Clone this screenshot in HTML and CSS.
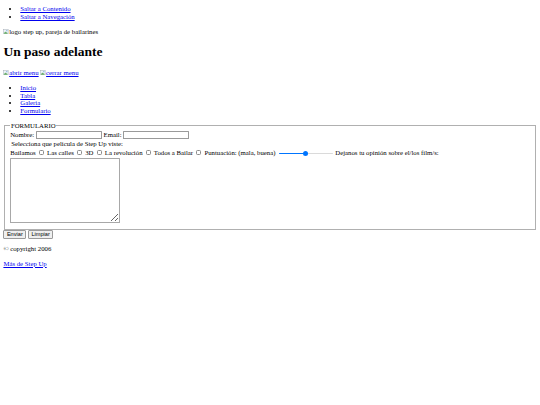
FILE: index.html
```html
<!DOCTYPE html>
<html lang="es">
<head>
<meta charset="utf-8">
<title>Step Up</title>
<link rel="stylesheet" href="styles.css">
</head>
<body class="page">
<header>
  <ul class="list list-top">
    <li><a href="#contenido">Saltar a Contenido</a></li>
    <li><a href="#nav">Saltar a Navegación</a></li>
  </ul>
  <div class="logo"><svg class="broken-icon" viewBox="0 0 8 8" aria-hidden="true"><rect x="0.5" y="0.5" width="7" height="7" fill="#eef3f7" stroke="#9aa4ad" stroke-width="0.6"/><path d="M1 6.8 L3.2 3.8 L4.6 5.4 L5.6 4.4 L7 6.8 Z" fill="#5aa35a"/><circle cx="5.6" cy="2.4" r="0.9" fill="#6fa8dc"/></svg>logo step up, pareja de bailarines</div>
  <h1 class="title">Un paso adelante</h1>
  <p class="para"><a href="#" class="broken"><svg class="broken-icon" viewBox="0 0 8 8" aria-hidden="true"><rect x="0.5" y="0.5" width="7" height="7" fill="#eef3f7" stroke="#9aa4ad" stroke-width="0.6"/><path d="M1 6.8 L3.2 3.8 L4.6 5.4 L5.6 4.4 L7 6.8 Z" fill="#5aa35a"/><circle cx="5.6" cy="2.4" r="0.9" fill="#6fa8dc"/></svg>abrir menu</a> <a href="#" class="broken"><svg class="broken-icon" viewBox="0 0 8 8" aria-hidden="true"><rect x="0.5" y="0.5" width="7" height="7" fill="#eef3f7" stroke="#9aa4ad" stroke-width="0.6"/><path d="M1 6.8 L3.2 3.8 L4.6 5.4 L5.6 4.4 L7 6.8 Z" fill="#5aa35a"/><circle cx="5.6" cy="2.4" r="0.9" fill="#6fa8dc"/></svg>cerrar menu</a></p>
  <nav id="nav">
    <ul class="list list-nav">
      <li><a href="#">Inicio</a></li>
      <li><a href="#">Tabla</a></li>
      <li><a href="#">Galeria</a></li>
      <li><a href="#">Formulario</a></li>
    </ul>
  </nav>
</header>
<main id="contenido">
  <form class="form">
    <fieldset class="box">
      <legend class="legend">FORMULARIO</legend>
      <label>Nombre: <input type="text" class="field"></label>
      <label>Email: <input type="email" class="field"></label>
      <div class="question">Selecciona que pelicula de Step Up viste:</div>
      <label>Bailamos <input type="checkbox" class="check"></label>
      <label>Las calles <input type="checkbox" class="check"></label>
      <label>3D <input type="checkbox" class="check"></label>
      <label>La revolución <input type="checkbox" class="check"></label>
      <label>Todos a Bailar <input type="checkbox" class="check"></label>
      <label>Puntuación: (mala, buena) <input type="range" class="range" min="0" max="100" value="50"></label>
      <label>Dejanos tu opinión sobre el/los film/s: <textarea class="area"></textarea></label>
    </fieldset>
    <button type="submit" class="btn">Enviar</button>
    <button type="reset" class="btn">Limpiar</button>
  </form>
</main>
<footer>
  <p class="para para-first">© copyright 2006</p>
  <p class="para"><a href="#">Más de Step Up</a></p>
</footer>
</body>
</html>
```
FILE: styles.css
```css
.page {
  margin: 0 3.4px 3.4px;
  font-family: "Liberation Serif", "Times New Roman", serif;
  font-size: 6.75px;
  line-height: 7.75px;
  color: #000;
  background: #fff;
}
.page a { color: #0000ee; }
.list {
  margin: 6.75px 0;
  padding-left: 16.9px;
}
.list-top { margin-top: 5.25px; }
.list-nav { margin-top: 5.75px; }
.logo { display: flex; align-items: center; }
.broken { display: inline-flex; align-items: center; }
.broken-icon {
  width: 5.5px;
  height: 5.5px;
  margin-right: 0.3px;
  flex: none;
}
.title {
  font-size: 13.5px;
  line-height: 15.5px;
  margin: 9px 0;
}
.para { margin: 6.75px 0; }
.para-first { margin-top: 6px; }
.form { margin: 0; }
.box {
  margin: 0 0.8px;
  padding: 1.5px 5px 4.5px;
  border: 1px solid #b0b0b0;
  min-width: 0;
}
.legend {
  padding: 0 0.8px;
  line-height: 7.75px;
}
.field {
  box-sizing: border-box;
  width: 66px;
  height: 8px;
  margin: 0;
  padding: 0 1px;
  border: 1px solid #9a9a9a;
  border-radius: 0.5px;
  font-size: 5.6px;
  vertical-align: middle;
}
.question {
  padding-left: 1px;
  line-height: 9px;
}
.check {
  appearance: none;
  -webkit-appearance: none;
  box-sizing: border-box;
  width: 5px;
  height: 5px;
  margin: 1.3px 1.3px 1.3px 1.7px;
  border: 0.6px solid #8a8a8a;
  border-radius: 1.4px;
  background: #fff;
  vertical-align: -0.8px;
}
.range {
  appearance: none;
  -webkit-appearance: none;
  width: 54px;
  height: 7px;
  margin: 0 1px 0 1.5px;
  padding: 0;
  background: transparent;
  vertical-align: middle;
}
.range::-webkit-slider-runnable-track {
  height: 1.8px;
  border-radius: 1px;
  background: linear-gradient(to right, #0075ff 50%, #dadada 50%);
}
.range::-webkit-slider-thumb {
  -webkit-appearance: none;
  appearance: none;
  width: 5px;
  height: 5px;
  margin-top: -1.6px;
  border-radius: 50%;
  background: #0075ff;
  border: none;
}
.area {
  display: block;
  box-sizing: border-box;
  width: 110px;
  height: 65px;
  margin: 0.5px 0 2px;
  padding: 1px;
  border: 1px solid #a8a8a8;
  border-radius: 0.5px;
  font-size: 5.6px;
}
.btn {
  box-sizing: border-box;
  height: 9px;
  margin: 0;
  padding: 0 2.5px;
  font-family: "Liberation Sans", Arial, sans-serif;
  font-size: 5.6px;
  line-height: 7px;
  color: #000;
  background: #efefef;
  border: 1px solid #9a9a9a;
  border-radius: 1px;
  vertical-align: top;
}
```
